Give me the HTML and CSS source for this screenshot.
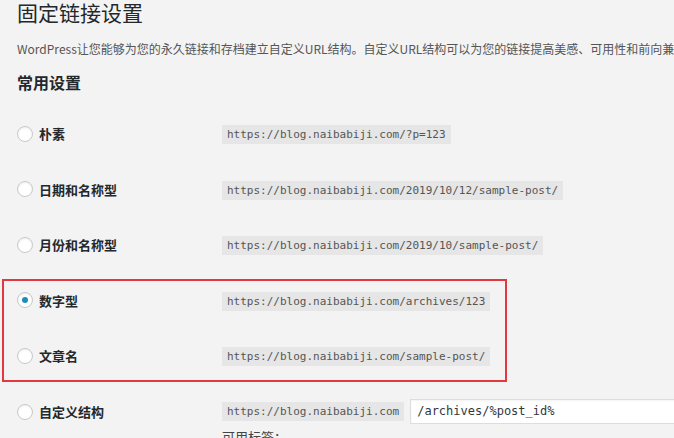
FILE: index.html
```html
<!DOCTYPE html>
<html lang="zh-CN">

<head>
  <meta charset="UTF-8">
  <meta name="viewport" content="width=device-width, initial-scale=1">
  <title>固定链接设置</title>
  <link rel="stylesheet" href="styles.css">
</head>

<body>
  <div class="wrap">
    <h1 class="page_title">固定链接设置</h1>
    <p class="page_desc">WordPress让您能够为您的永久链接和存档建立自定义URL结构。自定义URL结构可以为您的链接提高美感、可用性和前向兼容性。</p>
    <h2 class="section_title">常用设置</h2>

    <div class="pl_rows">
      <div class="pl_row">
        <label class="pl_label"><span class="pl_radio"></span>朴素</label>
        <div class="pl_value"><code>https://blog.naibabiji.com/?p=123</code></div>
      </div>
      <div class="pl_row">
        <label class="pl_label"><span class="pl_radio"></span>日期和名称型</label>
        <div class="pl_value"><code>https://blog.naibabiji.com/2019/10/12/sample-post/</code></div>
      </div>
      <div class="pl_row">
        <label class="pl_label"><span class="pl_radio"></span>月份和名称型</label>
        <div class="pl_value"><code>https://blog.naibabiji.com/2019/10/sample-post/</code></div>
      </div>
      <div class="pl_row">
        <label class="pl_label"><span class="pl_radio pl_checked"></span>数字型</label>
        <div class="pl_value"><code>https://blog.naibabiji.com/archives/123</code></div>
      </div>
      <div class="pl_row">
        <label class="pl_label"><span class="pl_radio"></span>文章名</label>
        <div class="pl_value"><code>https://blog.naibabiji.com/sample-post/</code></div>
      </div>
      <div class="pl_row pl_custom">
        <label class="pl_label"><span class="pl_radio"></span>自定义结构</label>
        <div class="pl_value">
          <div class="pl_custom_line">
            <code>https://blog.naibabiji.com</code>
            <span class="pl_input">/archives/%post_id%</span>
          </div>
          <div class="pl_tags">可用标签：</div>
        </div>
      </div>

      <!-- annotation box round the two rows -->
      <div class="pl_mark"></div>
    </div>
  </div>
</body>

</html>
```

FILE: styles.css
```css
html,
body {
  margin: 0;
  overflow: hidden;
}

body {
  background: #f3f3f3;
  color: #444;
  font-family: "Noto Sans CJK SC", "Noto Sans", sans-serif;
  font-size: 13px;
  width: 674px;
  height: 438px;
}

.wrap {
  padding-left: 17px;
}

.page_title {
  margin: 0;
  font-size: 21px;
  font-weight: 400;
  line-height: 25px;
  color: #23282d;
}

.page_desc {
  margin: 15px 0 0;
  font-size: 12px;
  line-height: 18px;
  color: #555;
  white-space: nowrap;
}

.section_title {
  margin: 14px 0 0;
  font-size: 16px;
  font-weight: 700;
  line-height: 20px;
  color: #23282d;
}

.pl_rows {
  position: relative;
  margin-top: 14.3px;
}

.pl_row {
  display: flex;
  align-items: center;
  height: 55.4px;
}

.pl_label {
  display: flex;
  align-items: center;
  width: 205px;
  flex: none;
  font-weight: 700;
  color: #23282d;
}

.pl_radio {
  position: relative;
  width: 16px;
  height: 16px;
  box-sizing: border-box;
  border: 1px solid #c6c9cc;
  border-radius: 50%;
  background: #fff;
  box-shadow: inset 0 1px 2px rgba(0, 0, 0, 0.08);
  margin-right: 6px;
}

.pl_checked::after {
  content: "";
  position: absolute;
  left: 4px;
  top: 4px;
  width: 6px;
  height: 6px;
  border-radius: 50%;
  background: #1e8cbe;
}

.pl_value code {
  display: inline-block;
  padding: 3px 5px;
  background: #e6e6e6;
  color: #555;
  font-family: "DejaVu Sans Mono", monospace;
  font-size: 11px;
  line-height: 13px;
}

.pl_custom {
  align-items: flex-start;
  height: auto;
  padding-top: 16px;
}

.pl_custom .pl_label {
  height: 25px;
}

.pl_custom_line {
  display: flex;
  align-items: center;
  height: 25px;
}

.pl_input {
  display: block;
  box-sizing: border-box;
  width: 280px;
  height: 25px;
  margin-left: 6px;
  padding: 0 6px;
  background: #fff;
  border: 1px solid #ddd;
  box-shadow: inset 0 1px 2px rgba(0, 0, 0, 0.05);
  color: #32373c;
  font-family: "DejaVu Sans Mono", monospace;
  font-size: 12px;
  line-height: 23px;
}

.pl_tags {
  margin-top: 4px;
  line-height: 18px;
  color: #444;
}

.pl_mark {
  position: absolute;
  left: -15px;
  top: 172.7px;
  width: 505px;
  height: 103px;
  box-sizing: border-box;
  border: 2px solid #e0393f;
}
```
